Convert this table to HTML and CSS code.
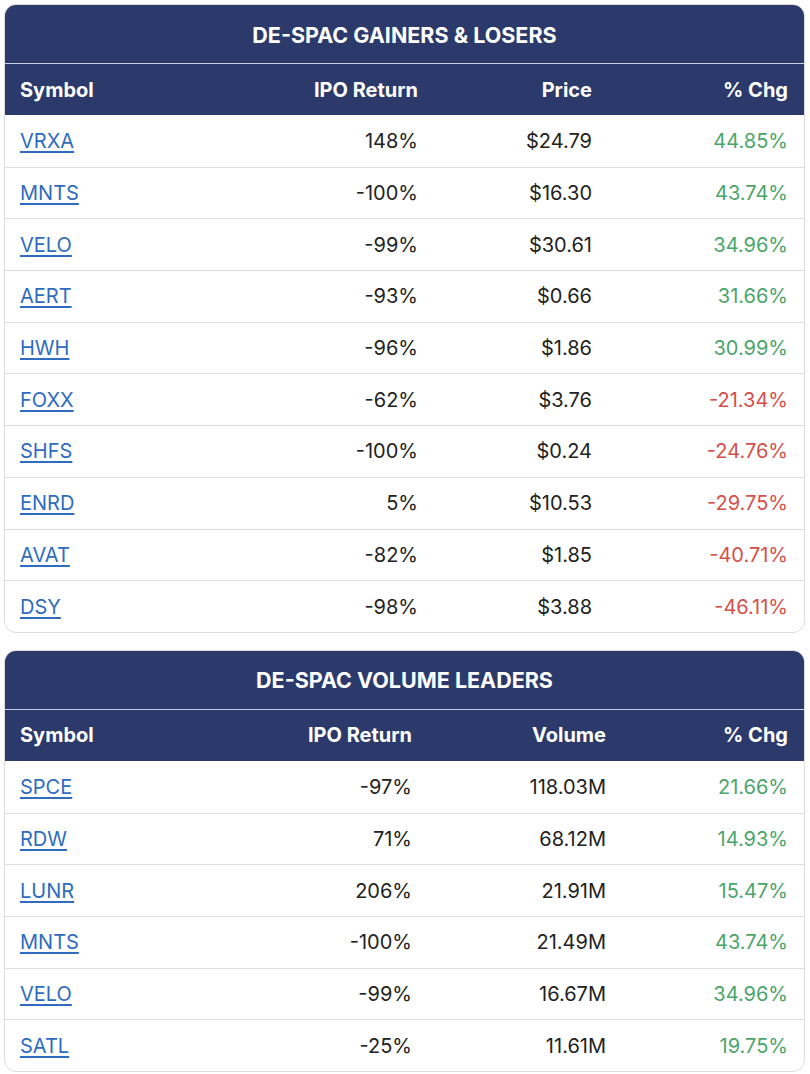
FILE: index.html
```html
<!DOCTYPE html>
<html>
<head>
<meta charset="utf-8">
<link rel="stylesheet" href="styles.css">
</head>
<body>
<div class="page">
  <section class="card">
    <div class="title">DE-SPAC GAINERS &amp; LOSERS</div>
    <table class="tbl tbl-gainers">
      <colgroup><col class="c1"><col class="c2"><col class="c3"><col class="c4"></colgroup>
      <thead><tr><th class="left">Symbol</th><th>IPO Return</th><th>Price</th><th>% Chg</th></tr></thead>
      <tbody>
        <tr><td class="left"><a href="#">VRXA</a></td><td>148%</td><td>$24.79</td><td class="up">44.85%</td></tr>
        <tr><td class="left"><a href="#">MNTS</a></td><td>-100%</td><td>$16.30</td><td class="up">43.74%</td></tr>
        <tr><td class="left"><a href="#">VELO</a></td><td>-99%</td><td>$30.61</td><td class="up">34.96%</td></tr>
        <tr><td class="left"><a href="#">AERT</a></td><td>-93%</td><td>$0.66</td><td class="up">31.66%</td></tr>
        <tr><td class="left"><a href="#">HWH</a></td><td>-96%</td><td>$1.86</td><td class="up">30.99%</td></tr>
        <tr><td class="left"><a href="#">FOXX</a></td><td>-62%</td><td>$3.76</td><td class="down">-21.34%</td></tr>
        <tr><td class="left"><a href="#">SHFS</a></td><td>-100%</td><td>$0.24</td><td class="down">-24.76%</td></tr>
        <tr><td class="left"><a href="#">ENRD</a></td><td>5%</td><td>$10.53</td><td class="down">-29.75%</td></tr>
        <tr><td class="left"><a href="#">AVAT</a></td><td>-82%</td><td>$1.85</td><td class="down">-40.71%</td></tr>
        <tr><td class="left"><a href="#">DSY</a></td><td>-98%</td><td>$3.88</td><td class="down">-46.11%</td></tr>
      </tbody>
    </table>
  </section>
  <section class="card">
    <div class="title">DE-SPAC VOLUME LEADERS</div>
    <table class="tbl tbl-volume">
      <colgroup><col class="c1"><col class="c2"><col class="c3"><col class="c4"></colgroup>
      <thead><tr><th class="left">Symbol</th><th>IPO Return</th><th>Volume</th><th>% Chg</th></tr></thead>
      <tbody>
        <tr><td class="left"><a href="#">SPCE</a></td><td>-97%</td><td>118.03M</td><td class="up">21.66%</td></tr>
        <tr><td class="left"><a href="#">RDW</a></td><td>71%</td><td>68.12M</td><td class="up">14.93%</td></tr>
        <tr><td class="left"><a href="#">LUNR</a></td><td>206%</td><td>21.91M</td><td class="up">15.47%</td></tr>
        <tr><td class="left"><a href="#">MNTS</a></td><td>-100%</td><td>21.49M</td><td class="up">43.74%</td></tr>
        <tr><td class="left"><a href="#">VELO</a></td><td>-99%</td><td>16.67M</td><td class="up">34.96%</td></tr>
        <tr><td class="left"><a href="#">SATL</a></td><td>-25%</td><td>11.61M</td><td class="up">19.75%</td></tr>
      </tbody>
    </table>
  </section>
</div>
</body>
</html>
```
FILE: styles.css
```css
html, body {
  margin: 0;
  padding: 0;
  background: #ffffff;
}
body {
  font-family: Inter, "Noto Sans", "Liberation Sans", sans-serif;
  color: #222222;
}
.page {
  padding: 4px 5px 0 4px;
  display: flex;
  flex-direction: column;
  gap: 17px;
}
.card {
  width: 801px;
  box-sizing: border-box;
  border: 1px solid #dcdcdc;
  border-radius: 12px;
  overflow: hidden;
  background: #fff;
}
.title {
  background: #2b3a6a;
  color: #ffffff;
  font-weight: 700;
  font-size: 21.5px;
  height: 59px;
  padding-top: 1px;
  box-sizing: border-box;
  display: flex;
  align-items: center;
  justify-content: center;
  border-bottom: 1px solid #c9d0e2;
}
.tbl {
  width: 100%;
  border-collapse: collapse;
  table-layout: fixed;
  font-size: 20px;
}
.tbl th {
  background: #2b3a6a;
  color: #ffffff;
  font-weight: 700;
  height: 51px;
  padding: 0 16px;
  text-align: right;
  vertical-align: middle;
}
.tbl td {
  height: 50.7px;
  padding: 0 16px;
  text-align: right;
  vertical-align: middle;
  color: #222222;
  border-top: 1px solid #dddddd;
}
.tbl tbody tr:first-child td {
  border-top: none;
  height: 51.7px;
}
.tbl .left {
  text-align: left;
  padding-left: 15px;
}
.tbl a {
  color: #2f6cc0;
  text-decoration: underline;
  text-underline-offset: 3px;
  text-decoration-thickness: 1.5px;
}
.tbl .up { color: #4aa56a; }
.tbl .down { color: #d4504a; }

.tbl-gainers .c1 { width: 245px; }
.tbl-gainers .c2 { width: 184px; }
.tbl-gainers .c3 { width: 174px; }
.tbl-gainers .c4 { width: 196px; }

.tbl-volume .c1 { width: 235px; }
.tbl-volume .c2 { width: 188px; }
.tbl-volume .c3 { width: 194px; }
.tbl-volume .c4 { width: 182px; }
```
